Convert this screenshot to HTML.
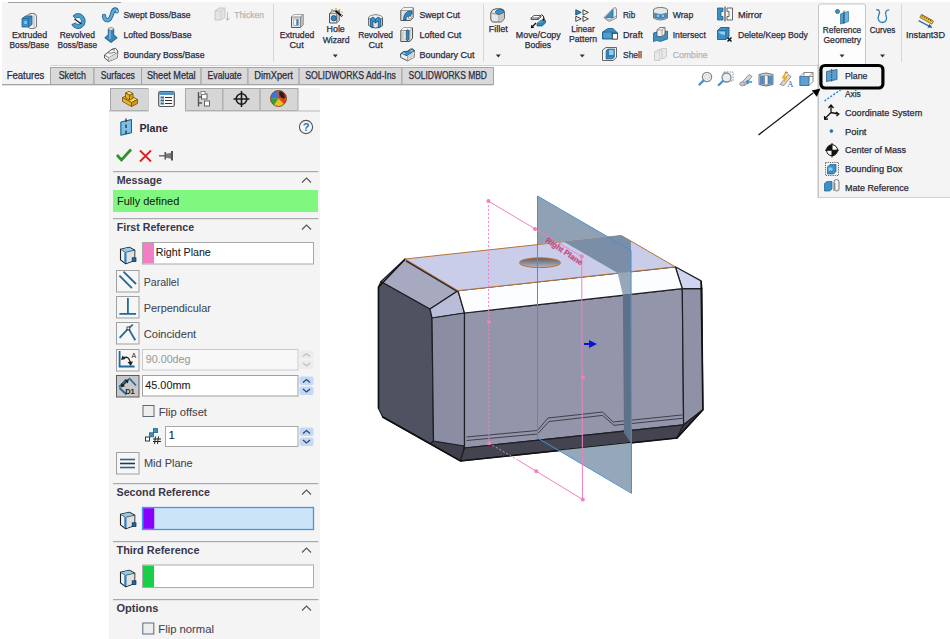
<!DOCTYPE html>
<html><head><meta charset="utf-8">
<style>
*{margin:0;padding:0}
html,body{width:950px;height:639px;overflow:hidden;background:#fff}
svg{position:absolute;left:0;top:0;font-family:"Liberation Sans",sans-serif}
</style></head><body>
<svg width="950" height="639" viewBox="0 0 950 639">
<rect x="0" y="0" width="950" height="66" fill="#f4f4f4" rx="0" />
<rect x="0" y="0" width="950" height="2" fill="#ffffff" rx="0" />
<rect x="0" y="0" width="2" height="66" fill="#ffffff" rx="0" />
<rect x="8" y="2" width="113" height="1" fill="#a0a0a0" rx="0" />
<rect x="50" y="65.2" width="900" height="1.6" fill="#cdcdcd" rx="0" />
<rect x="273" y="4" width="1" height="58" fill="#d6d6d6" rx="0" />
<rect x="483" y="4" width="1" height="58" fill="#d6d6d6" rx="0" />
<rect x="901" y="4" width="1" height="58" fill="#d6d6d6" rx="0" />
<path d="M818.5,64 V6 a2,2 0 0 1 2,-2 H863.5 a2,2 0 0 1 2,2 V64" fill="#fdfdfd" stroke="#c6c6c6" stroke-width="1"/>
<text x="29.5" y="37.6" font-size="9.2" text-anchor="middle" fill="#2a2a3c" font-weight="normal" textLength="35.2" lengthAdjust="spacingAndGlyphs" stroke="#2a2a3c" stroke-width="0.25" >Extruded</text>
<text x="29.3" y="47.8" font-size="9.2" text-anchor="middle" fill="#2a2a3c" font-weight="normal" textLength="39.5" lengthAdjust="spacingAndGlyphs" stroke="#2a2a3c" stroke-width="0.25" >Boss/Base</text>
<text x="77.3" y="37.6" font-size="9.2" text-anchor="middle" fill="#2a2a3c" font-weight="normal" textLength="35.3" lengthAdjust="spacingAndGlyphs" stroke="#2a2a3c" stroke-width="0.25" >Revolved</text>
<text x="77.2" y="47.8" font-size="9.2" text-anchor="middle" fill="#2a2a3c" font-weight="normal" textLength="39.6" lengthAdjust="spacingAndGlyphs" stroke="#2a2a3c" stroke-width="0.25" >Boss/Base</text>
<text x="123.4" y="18" font-size="9.2" text-anchor="start" fill="#2a2a3c" font-weight="normal" textLength="67.2" lengthAdjust="spacingAndGlyphs" stroke="#2a2a3c" stroke-width="0.25" >Swept Boss/Base</text>
<text x="123.4" y="37.9" font-size="9.2" text-anchor="start" fill="#2a2a3c" font-weight="normal" textLength="68.2" lengthAdjust="spacingAndGlyphs" stroke="#2a2a3c" stroke-width="0.25" >Lofted Boss/Base</text>
<text x="123.4" y="57.8" font-size="9.2" text-anchor="start" fill="#2a2a3c" font-weight="normal" textLength="81.1" lengthAdjust="spacingAndGlyphs" stroke="#2a2a3c" stroke-width="0.25" >Boundary Boss/Base</text>
<text x="234.2" y="18" font-size="9.2" text-anchor="start" fill="#b4b4b4" font-weight="normal" textLength="29.8" lengthAdjust="spacingAndGlyphs" stroke="#b4b4b4" stroke-width="0.25" >Thicken</text>
<text x="297" y="37.6" font-size="9.2" text-anchor="middle" fill="#2a2a3c" font-weight="normal" textLength="34.5" lengthAdjust="spacingAndGlyphs" stroke="#2a2a3c" stroke-width="0.25" >Extruded</text>
<text x="296.6" y="47.8" font-size="9.2" text-anchor="middle" fill="#2a2a3c" font-weight="normal" textLength="14.2" lengthAdjust="spacingAndGlyphs" stroke="#2a2a3c" stroke-width="0.25" >Cut</text>
<text x="335.7" y="32.4" font-size="9.2" text-anchor="middle" fill="#2a2a3c" font-weight="normal" textLength="18.2" lengthAdjust="spacingAndGlyphs" stroke="#2a2a3c" stroke-width="0.25" >Hole</text>
<text x="336.1" y="42.7" font-size="9.2" text-anchor="middle" fill="#2a2a3c" font-weight="normal" textLength="26.8" lengthAdjust="spacingAndGlyphs" stroke="#2a2a3c" stroke-width="0.25" >Wizard</text>
<text x="375.6" y="37.6" font-size="9.2" text-anchor="middle" fill="#2a2a3c" font-weight="normal" textLength="34.8" lengthAdjust="spacingAndGlyphs" stroke="#2a2a3c" stroke-width="0.25" >Revolved</text>
<text x="375.6" y="47.8" font-size="9.2" text-anchor="middle" fill="#2a2a3c" font-weight="normal" textLength="14.2" lengthAdjust="spacingAndGlyphs" stroke="#2a2a3c" stroke-width="0.25" >Cut</text>
<text x="419.4" y="18" font-size="9.2" text-anchor="start" fill="#2a2a3c" font-weight="normal" textLength="40.6" lengthAdjust="spacingAndGlyphs" stroke="#2a2a3c" stroke-width="0.25" >Swept Cut</text>
<text x="419.4" y="37.9" font-size="9.2" text-anchor="start" fill="#2a2a3c" font-weight="normal" textLength="42" lengthAdjust="spacingAndGlyphs" stroke="#2a2a3c" stroke-width="0.25" >Lofted Cut</text>
<text x="419.4" y="57.8" font-size="9.2" text-anchor="start" fill="#2a2a3c" font-weight="normal" textLength="55.2" lengthAdjust="spacingAndGlyphs" stroke="#2a2a3c" stroke-width="0.25" >Boundary Cut</text>
<text x="498.3" y="32" font-size="9.2" text-anchor="middle" fill="#2a2a3c" font-weight="normal" textLength="19.1" lengthAdjust="spacingAndGlyphs" stroke="#2a2a3c" stroke-width="0.25" >Fillet</text>
<text x="538.3" y="37.6" font-size="9.2" text-anchor="middle" fill="#2a2a3c" font-weight="normal" textLength="44.9" lengthAdjust="spacingAndGlyphs" stroke="#2a2a3c" stroke-width="0.25" >Move/Copy</text>
<text x="537.9" y="47.8" font-size="9.2" text-anchor="middle" fill="#2a2a3c" font-weight="normal" textLength="26.2" lengthAdjust="spacingAndGlyphs" stroke="#2a2a3c" stroke-width="0.25" >Bodies</text>
<text x="583" y="32" font-size="9.2" text-anchor="middle" fill="#2a2a3c" font-weight="normal" textLength="23.5" lengthAdjust="spacingAndGlyphs" stroke="#2a2a3c" stroke-width="0.25" >Linear</text>
<text x="583" y="42" font-size="9.2" text-anchor="middle" fill="#2a2a3c" font-weight="normal" textLength="28" lengthAdjust="spacingAndGlyphs" stroke="#2a2a3c" stroke-width="0.25" >Pattern</text>
<text x="623" y="17.8" font-size="9.2" text-anchor="start" fill="#2a2a3c" font-weight="normal" textLength="12.2" lengthAdjust="spacingAndGlyphs" stroke="#2a2a3c" stroke-width="0.25" >Rib</text>
<text x="623" y="37.6" font-size="9.2" text-anchor="start" fill="#2a2a3c" font-weight="normal" textLength="19.7" lengthAdjust="spacingAndGlyphs" stroke="#2a2a3c" stroke-width="0.25" >Draft</text>
<text x="623" y="57.6" font-size="9.2" text-anchor="start" fill="#2a2a3c" font-weight="normal" textLength="18.8" lengthAdjust="spacingAndGlyphs" stroke="#2a2a3c" stroke-width="0.25" >Shell</text>
<text x="672.7" y="17.8" font-size="9.2" text-anchor="start" fill="#2a2a3c" font-weight="normal" textLength="20.6" lengthAdjust="spacingAndGlyphs" stroke="#2a2a3c" stroke-width="0.25" >Wrap</text>
<text x="672.7" y="37.6" font-size="9.2" text-anchor="start" fill="#2a2a3c" font-weight="normal" textLength="33.1" lengthAdjust="spacingAndGlyphs" stroke="#2a2a3c" stroke-width="0.25" >Intersect</text>
<text x="672.7" y="57.6" font-size="9.2" text-anchor="start" fill="#b4b4b4" font-weight="normal" textLength="34.9" lengthAdjust="spacingAndGlyphs" stroke="#b4b4b4" stroke-width="0.25" >Combine</text>
<text x="738" y="17.8" font-size="9.2" text-anchor="start" fill="#2a2a3c" font-weight="normal" textLength="24.2" lengthAdjust="spacingAndGlyphs" stroke="#2a2a3c" stroke-width="0.25" >Mirror</text>
<text x="738" y="37.6" font-size="9.2" text-anchor="start" fill="#2a2a3c" font-weight="normal" textLength="69.8" lengthAdjust="spacingAndGlyphs" stroke="#2a2a3c" stroke-width="0.25" >Delete/Keep Body</text>
<text x="842" y="32.5" font-size="9.2" text-anchor="middle" fill="#2a2a3c" font-weight="normal" textLength="38.4" lengthAdjust="spacingAndGlyphs" stroke="#2a2a3c" stroke-width="0.25" >Reference</text>
<text x="842.3" y="42.5" font-size="9.2" text-anchor="middle" fill="#2a2a3c" font-weight="normal" textLength="37.7" lengthAdjust="spacingAndGlyphs" stroke="#2a2a3c" stroke-width="0.25" >Geometry</text>
<text x="882.5" y="32.5" font-size="9.2" text-anchor="middle" fill="#2a2a3c" font-weight="normal" textLength="25.6" lengthAdjust="spacingAndGlyphs" stroke="#2a2a3c" stroke-width="0.25" >Curves</text>
<text x="925.5" y="37.5" font-size="9.2" text-anchor="middle" fill="#2a2a3c" font-weight="normal" textLength="39" lengthAdjust="spacingAndGlyphs" stroke="#2a2a3c" stroke-width="0.25" >Instant3D</text>
<path d="M332.8,54.5 h5 l-2.5,3 z" fill="#333"/>
<path d="M495.8,54.5 h5 l-2.5,3 z" fill="#333"/>
<path d="M579.7,54.5 h5 l-2.5,3 z" fill="#333"/>
<path d="M839.5,54.5 h5 l-2.5,3 z" fill="#333"/>
<path d="M880.0,54.5 h5 l-2.5,3 z" fill="#333"/>
<rect x="0" y="66" width="950" height="18" fill="#ffffff" rx="0" />
<rect x="2" y="64" width="48" height="20" fill="#f4f4f4" rx="0" />
<rect x="50.5" y="67.5" width="43.5" height="17" fill="#d9d9d9" stroke="#a4a4a4" stroke-width="1"/>
<text x="72.25" y="78.9" font-size="10" text-anchor="middle" fill="#2a2a3c" font-weight="normal" textLength="27.2" lengthAdjust="spacingAndGlyphs" stroke="#2a2a3c" stroke-width="0.25" >Sketch</text>
<rect x="94.0" y="67.5" width="47.5" height="17" fill="#d9d9d9" stroke="#a4a4a4" stroke-width="1"/>
<text x="117.75" y="78.9" font-size="10" text-anchor="middle" fill="#2a2a3c" font-weight="normal" textLength="34.2" lengthAdjust="spacingAndGlyphs" stroke="#2a2a3c" stroke-width="0.25" >Surfaces</text>
<rect x="141.5" y="67.5" width="59.599999999999994" height="17" fill="#d9d9d9" stroke="#a4a4a4" stroke-width="1"/>
<text x="171.3" y="78.9" font-size="10" text-anchor="middle" fill="#2a2a3c" font-weight="normal" textLength="48.7" lengthAdjust="spacingAndGlyphs" stroke="#2a2a3c" stroke-width="0.25" >Sheet Metal</text>
<rect x="201.1" y="67.5" width="46.900000000000006" height="17" fill="#d9d9d9" stroke="#a4a4a4" stroke-width="1"/>
<text x="224.55" y="78.9" font-size="10" text-anchor="middle" fill="#2a2a3c" font-weight="normal" textLength="34.2" lengthAdjust="spacingAndGlyphs" stroke="#2a2a3c" stroke-width="0.25" >Evaluate</text>
<rect x="248.0" y="67.5" width="51.10000000000002" height="17" fill="#d9d9d9" stroke="#a4a4a4" stroke-width="1"/>
<text x="273.55" y="78.9" font-size="10" text-anchor="middle" fill="#2a2a3c" font-weight="normal" textLength="38.7" lengthAdjust="spacingAndGlyphs" stroke="#2a2a3c" stroke-width="0.25" >DimXpert</text>
<rect x="299.1" y="67.5" width="102.89999999999998" height="17" fill="#d9d9d9" stroke="#a4a4a4" stroke-width="1"/>
<text x="350.55" y="78.9" font-size="10" text-anchor="middle" fill="#2a2a3c" font-weight="normal" textLength="90.8" lengthAdjust="spacingAndGlyphs" stroke="#2a2a3c" stroke-width="0.25" >SOLIDWORKS Add-Ins</text>
<rect x="402.0" y="67.5" width="91.5" height="17" fill="#d9d9d9" stroke="#a4a4a4" stroke-width="1"/>
<text x="447.75" y="78.9" font-size="10" text-anchor="middle" fill="#2a2a3c" font-weight="normal" textLength="78.3" lengthAdjust="spacingAndGlyphs" stroke="#2a2a3c" stroke-width="0.25" >SOLIDWORKS MBD</text>
<text x="25.5" y="78.9" font-size="10" text-anchor="middle" fill="#2a2a3c" font-weight="normal" textLength="37.7" lengthAdjust="spacingAndGlyphs" stroke="#2a2a3c" stroke-width="0.25" >Features</text>
<rect x="2" y="84" width="491" height="1.3" fill="#9ea6a6" rx="0" />
<g transform="translate(698,71.5) scale(1)"><circle cx="9" cy="5.5" r="4.6" fill="#eef3f7" stroke="#8a8a8a" stroke-width="1.3"/><circle cx="9" cy="5.5" r="2.2" fill="none" stroke="#999" stroke-width="0.8" stroke-dasharray="1,1"/><path d="M5.5,9 L1.5,13" stroke="#4a90c8" stroke-width="2.4" stroke-linecap="round"/></g>
<g transform="translate(717,71.5) scale(1)"><rect x="7" y="0.5" width="9" height="9" fill="none" stroke="#777" stroke-width="0.9" stroke-dasharray="1.5,1.2"/><circle cx="9.5" cy="6" r="4.5" fill="#e4eef6" stroke="#8a8a8a" stroke-width="1.3"/><path d="M6,9.5 L1.8,13.5" stroke="#4a90c8" stroke-width="2.4" stroke-linecap="round"/></g>
<g transform="translate(738,71.5) scale(1)"><path d="M3,12 L11,3 L14,5 L7,14 Z" fill="#d8d8d8" stroke="#888" stroke-width="0.9"/><ellipse cx="4.5" cy="12.3" rx="2.8" ry="2" fill="#c4c4c4" stroke="#888" stroke-width="0.8"/><path d="M8,10.5 H14 M8,10.5 l2.5,-2 M8,10.5 l2.5,2" stroke="#3a8fc4" stroke-width="1.5" fill="none"/></g>
<g transform="translate(758,71.5) scale(1)"><path d="M1,3 Q8,0 15,3 V13 Q8,16 1,13 Z" fill="#dadde2" stroke="#666" stroke-width="0.9"/><rect x="2" y="4" width="4.5" height="9" fill="#3a7fc0" opacity=".85"/><rect x="10" y="4" width="4.5" height="9" fill="#3a7fc0" opacity=".85"/><path d="M6.5,4 Q8,3 10,4 V13 Q8,14 6.5,13 Z" fill="#f0f0f0" stroke="#666" stroke-width="0.6"/></g>
<g transform="translate(778,71.5) scale(1)"><path d="M2,13 L10,3 L13,5 L6,14 Z" fill="#d9d9d9" stroke="#888" stroke-width="0.9"/><path d="M8,1 L5,6 L8,6 L6,10" stroke="#e8b020" stroke-width="1.8" fill="none"/><path d="M7,0.5 l3,1" stroke="#e08040" stroke-width="1.5"/><text x="9" y="15" font-size="9" font-family="Liberation Serif" fill="#3a6fb0">A</text></g>
<g transform="translate(799,71.5) scale(1)"><path d="M1,5 L5,1 H14 V10 L10,14 H1 Z" fill="#fff" stroke="#777" stroke-width="0.9"/><rect x="1" y="5" width="9" height="9" fill="#5a9fd6" stroke="#3a6f9a" stroke-width="0.8"/><path d="M10,5 L14,1 M5,1 V5 M10,5 V10 M14,5 H10" stroke="#777" stroke-width="0.8" fill="none"/></g>
<g transform="translate(21,13) scale(1)"><path d="M6,2.5 L9,0.5 H13 Q15.5,1 15.5,3 V14 L13,15.5 H9 L6,13 Z" fill="#f2f2f2" stroke="#6d6d6d" stroke-width="0.9"/><path d="M9,0.5 V13 M13,0.5 V15.5" stroke="#999" stroke-width="0.7"/><path d="M1,5.5 L4.5,3 H11 V11.5 L7.5,14 H1 Z" fill="#3d8fc4" stroke="#1f5f8a" stroke-width="0.8"/><path d="M1,5.5 H7.5 V14 M7.5,5.5 L11,3" stroke="#1f5f8a" stroke-width="0.7" fill="none"/><rect x="3" y="8" width="3" height="3" fill="#7cc0ea"/></g>
<g transform="translate(70,13) scale(1)"><path d="M3,3 A7,7.5 0 1 1 1.9,11.5 L5.5,10 A3.3,3.5 0 1 0 5.6,5.6 Z" fill="#4a9ed2" stroke="#1f5f8a" stroke-width="0.9"/><path d="M4.5,6 L11.5,11" stroke="#222" stroke-width="1.2"/></g>
<g transform="translate(102,7) scale(1)"><path d="M2,8.8 Q2.5,13.8 6,13.2 Q8.5,12.5 10.2,6.5 Q11.3,2.6 13,2.4 Q14.6,2.4 14.8,4.4" fill="none" stroke="#1f5f8a" stroke-width="4.2" stroke-linecap="round"/><path d="M2,8.8 Q2.5,13.8 6,13.2 Q8.5,12.5 10.2,6.5 Q11.3,2.6 13,2.4 Q14.6,2.4 14.8,4.4" fill="none" stroke="#5aaede" stroke-width="2.5" stroke-linecap="round"/><circle cx="15" cy="4.6" r="1" fill="#9fd4f2"/></g>
<g transform="translate(104,27) scale(1)"><path d="M4.3,2 Q7,0.5 9.7,2 V7.5 Q11,9 13.2,10.8 L7,15.5 L0.8,10.8 Q3,9 4.3,7.5 Z" fill="#3a86bc" stroke="#1f5070" stroke-width="0.9"/><ellipse cx="7" cy="2" rx="2.7" ry="1.3" fill="#f4f4f4" stroke="#555" stroke-width="0.6"/><path d="M6,3.5 V12" stroke="#7fc0e8" stroke-width="1.4"/></g>
<g transform="translate(104,48) scale(1)"><path d="M0.5,7 L8,1.2 L11.5,0.3 L13.8,3 L13.3,10 L4.8,13.3 L0.6,10 Z" fill="#f2f2f2" stroke="#444" stroke-width="0.9"/><path d="M0.5,7 L4.8,9.8 L13.5,4.5 M4.8,9.8 V13.3 M4,4.5 Q6,6 8,5 Q10,3.8 11.5,4.8 M8,1.2 Q9,2.5 11,2" stroke="#555" stroke-width="0.7" fill="none"/><path d="M4.8,9.8 L13.4,5 L13.3,10 L4.8,13.3 Z" fill="#d8d8d8"/></g>
<g transform="translate(214,7) scale(1)"><path d="M1,4 L5,1 H11 V10 L7,13 H1 Z" fill="#e4e4e4" stroke="#c4c4c4" stroke-width="0.9"/><path d="M1,4 H7 V13 M7,4 L11,1" stroke="#c8c8c8" stroke-width="0.7" fill="none"/><path d="M13.5,5 V13 M11.5,11 L13.5,13.5 L15.5,11" stroke="#bdbdbd" stroke-width="1" fill="none"/></g>
<g transform="translate(291,14) scale(1)"><path d="M0.5,3 L3,0.5 H12 V11 L9.5,13.5 H0.5 Z" fill="#e6e6e6" stroke="#5a5a5a" stroke-width="1"/><path d="M9.5,3 L12,0.5 V11 L9.5,13.5 Z" fill="#bcbcbc"/><path d="M0.5,3 L3,0.5 H12 L9.5,3 Z" fill="#f6f6f6"/><path d="M0.5,3 H9.5 V13.5 M9.5,3 L12,0.5" stroke="#666" stroke-width="0.7" fill="none"/><rect x="2.8" y="5" width="4.5" height="6.5" fill="#fafafa" stroke="#888" stroke-width="0.6"/><path d="M5.3,5.3 H7.2 V11.3 H5.3 Z" fill="#2f86c4"/></g>
<g transform="translate(329,8) scale(1)"><path d="M0.5,5.5 L3.5,3 H10.5 V12.5 L7.5,15 H0.5 Z" fill="#e4e4e4" stroke="#555" stroke-width="1"/><path d="M7.5,5.5 L10.5,3 V12.5 L7.5,15 Z" fill="#b8b8b8"/><path d="M0.5,5.5 H7.5 V15 M7.5,5.5 L10.5,3" stroke="#666" stroke-width="0.7" fill="none"/><circle cx="4.8" cy="10.2" r="2.6" fill="#2f86c4" stroke="#114a70" stroke-width="0.8"/><path d="M6.5,3 L13.5,8.5" stroke="#111" stroke-width="1.8"/><path d="M12,7.3 L14,8.9" stroke="#e8e8e8" stroke-width="1"/><circle cx="3" cy="2" r="0.9" fill="#e0a020"/><circle cx="7" cy="0.9" r="0.9" fill="#e0a020"/><circle cx="10.5" cy="1.8" r="0.9" fill="#e0a020"/><circle cx="13" cy="4" r="0.8" fill="#e0a020"/></g>
<g transform="translate(368,14) scale(1)"><path d="M0.7,3.5 Q7.5,-1.5 14.5,3.5 V11.5 Q7.5,16.5 0.7,11.5 Z" fill="#e2e2e2" stroke="#555" stroke-width="1"/><ellipse cx="7.6" cy="3.5" rx="6.9" ry="2.7" fill="#f4f4f4" stroke="#666" stroke-width="0.7"/><path d="M2.5,4.5 L5,3 L7.5,5 L10,3 L12.8,4.5 V12.8 L10.3,14 V7 L7.5,9 L5,7 V14 L2.5,12.8 Z" fill="#3a8fc8" stroke="#144a70" stroke-width="0.7"/><path d="M7.5,5 V9" stroke="#144a70" stroke-width="0.6"/></g>
<g transform="translate(400,7) scale(1)"><path d="M0.8,3.5 L3.5,0.8 H13.2 V10.5 L10.5,13.5 H0.8 Z" fill="#e2e2e2" stroke="#555" stroke-width="1"/><path d="M0.8,3.5 L3.5,0.8 H13.2 L10.5,3.5 Z" fill="#f4f4f4"/><path d="M3.5,13 Q3.5,5 10,3.8 H12 V7 Q10.5,7.3 10.5,9 V10.5 H8.5 Q8,9 7,9.3 Q6,10 6,13 Z" fill="#2f86c4" stroke="#144a70" stroke-width="0.7"/><circle cx="10" cy="10.5" r="1.5" fill="#fff" stroke="#444" stroke-width="0.5"/><path d="M0.8,3.5 H10.5" stroke="#666" stroke-width="0.6"/></g>
<g transform="translate(400,27) scale(1)"><path d="M0.8,3.5 L3.5,0.8 H12.5 V11.5 L9.8,14.5 H0.8 Z" fill="#e6e6e6" stroke="#555" stroke-width="1"/><path d="M0.8,3.5 L3.5,0.8 H12.5 L9.8,3.5 Z" fill="#f6f6f6"/><path d="M0.8,3.5 H9.8 V14.5 M9.8,3.5 L12.5,0.8" stroke="#666" stroke-width="0.6" fill="none"/><path d="M2,4.5 H4 V13.5 H2 Z" fill="#cfcfcf"/><path d="M6.3,3.5 Q7.5,2 8.8,3.5 V8 Q8.2,10 8.8,12 L7.5,14 L6,12.5 Q6.8,10 6.3,8 Z" fill="#2f86c4" stroke="#144a70" stroke-width="0.7"/></g>
<g transform="translate(400,48) scale(1)"><path d="M0.5,6 L3,4 Q5,3 7,3.5 L10.5,1 Q12.5,0 14.5,2.5 V9 L7.5,12.8 L0.7,9.5 Z" fill="#f0f0f0" stroke="#444" stroke-width="0.9"/><path d="M0.5,6 Q2,5 4,6.5 Q6,8 7.5,7.5 L14.5,3 L12,1.2 Q10,2 9,3 L7,3.5 L3,4 Z" fill="#3a8fc8" stroke="#144a70" stroke-width="0.7"/><ellipse cx="4" cy="5.2" rx="1.4" ry="0.7" fill="#9fd4f2"/><ellipse cx="11.5" cy="2.8" rx="1.4" ry="0.7" fill="#9fd4f2"/><path d="M7.5,7.5 V12.8" stroke="#555" stroke-width="0.7"/><path d="M7.5,7.8 L14.5,3.2 V9 L7.5,12.8 Z" fill="#d4d4d4"/></g>
<g transform="translate(490,8) scale(1)"><path d="M0.8,4.5 Q2,1 6,0.8 H11 Q14.5,1 14.5,5 V10.5 L11.5,14 H3 Q0.8,13.5 0.8,11 Z" fill="#e8e8e8" stroke="#555" stroke-width="1"/><path d="M5,4 Q6.5,1.5 9.5,1.3 H11 Q14,1.5 14,4.5 Q12,6.5 9,6.5 Q6,6 5,4 Z" fill="#3a8fc8" stroke="#144a70" stroke-width="0.6"/><path d="M0.8,4.5 Q3,6 9,6.5 V14 M9,6.5 Q13,6 14.5,3.5" stroke="#666" stroke-width="0.7" fill="none"/><path d="M9.5,6.8 Q13.5,6 14.2,4.5 V10.3 L11.5,13.6 H9.5 Z" fill="#c8c8c8"/></g>
<g transform="translate(530,14) scale(1)"><path d="M1,4 L4,1.5 H11 L8,4 Z" fill="#fff" stroke="#333" stroke-width="0.8"/><path d="M1,4 V5.5 H8 L11,3 V1.5 M8,4 V5.5" stroke="#333" stroke-width="0.8" fill="none"/><path d="M7,9.5 L10.5,6.5 H15.5 L12,9.5 Z" fill="#5aaede" stroke="#144a70" stroke-width="0.7"/><path d="M7,9.5 V12 H12 L15.5,9 V6.5" fill="#2f86c4" stroke="#144a70" stroke-width="0.7"/><path d="M11.5,0.5 Q14.5,1.5 13.8,5.5" stroke="#111" stroke-width="1" fill="none"/><path d="M12,5 L13.8,7 L15.2,4.6 Z" fill="#111"/><path d="M6,9 L2,13" stroke="#111" stroke-width="1.2"/><path d="M0.8,14.3 L1.3,10.8 L4.3,13.8 Z" fill="#111"/></g>
<g transform="translate(575,9) scale(1)"><path d="M0.8,0.8 L6.2,3.4 L0.8,6 Z" fill="#2f86c4" stroke="#144a70" stroke-width="0.9"/><path d="M8,0.8 L13.4,3.4 L8,6 Z M0.8,7.2 L6.2,9.8 L0.8,12.4 Z M8,7.2 L13.4,9.8 L8,12.4 Z" fill="#fafafa" stroke="#333" stroke-width="0.9"/></g>
<g transform="translate(603,7) scale(1)"><path d="M1,10.5 L9.5,2 L12,0.5 Q13.5,1 13.5,3 V11 L6,14.5 Z" fill="#ececec" stroke="#777" stroke-width="0.8"/><path d="M2.5,10.5 L10,2.5 V10.5 Z" fill="#3d8fc4" stroke="#1f5f8a" stroke-width="0.7"/><path d="M1,10.5 L6,13 L13.5,9" stroke="#777" stroke-width="0.7" fill="none"/></g>
<g transform="translate(602,28) scale(1)"><path d="M0.5,4 L6,0.5 H11 L15.5,5 V11 H0.5 Z" fill="#3d8fc4" stroke="#1f5f8a" stroke-width="0.9"/><path d="M0.5,4 H10 L15.5,5 M10,4 V11" stroke="#1f5f8a" stroke-width="0.6" fill="none"/><rect x="10.5" y="5.5" width="5" height="5.5" fill="#fff" stroke="#333" stroke-width="0.7"/><path d="M2,5 L9,4.5 L10,10 H2 Z" fill="#5aa8da" opacity=".6"/></g>
<g transform="translate(602,47) scale(1)"><path d="M0.5,3 L4,0.5 H14.5 V10.5 L11,13.5 H0.5 Z" fill="#f4f4f4" stroke="#555" stroke-width="0.9"/><path d="M4,3.5 L6,2 H12.5 V10 L10.5,12 H4 Z" fill="#3d8fc4" stroke="#1f5f8a" stroke-width="0.6"/><path d="M6,2 V9 H12.5 M6,9 L4,12" stroke="#1f5f8a" stroke-width="0.6" fill="none"/><path d="M7,3 h4.5 v5 h-4.5 z" fill="#8fcbef"/></g>
<g transform="translate(653,7) scale(1)"><ellipse cx="7.5" cy="3" rx="7" ry="2.5" fill="#e8e8e8" stroke="#666" stroke-width="0.9"/><path d="M0.5,3 V11 Q7.5,15 14.5,11 V3" fill="#e8e8e8" stroke="#666" stroke-width="0.9"/><path d="M1.5,6 Q7.5,9 13.5,6 V10.5 Q7.5,13 1.5,10.5 Z" fill="#3d8fc4" stroke="#1f5f8a" stroke-width="0.5"/><path d="M4,8 h2 v2 h-2z M9,8 h2 v2 h-2z" fill="#8fcbef"/></g>
<g transform="translate(653,27) scale(1)"><path d="M0.5,6 Q4,4 7,6 L14.5,4 V12 L7,14.5 Q4,12.5 0.5,14.5 Z" fill="#3d8fc4" stroke="#1f5f8a" stroke-width="0.8"/><path d="M4,3 L7,0.5 H12 V7 L9,9.5 H4 Z" fill="#efefef" stroke="#555" stroke-width="0.8"/><path d="M4,3 H9 V9.5 M9,3 L12,0.5" stroke="#777" stroke-width="0.6" fill="none"/></g>
<g transform="translate(654,48) scale(1)"><path d="M0.5,4 L3,2 H8 V10 L5.5,12.5 H0.5 Z M5,2 L8,0.5 H12.5 V8.5 L10,10.5 H8" fill="#e8e8e8" stroke="#c8c8c8" stroke-width="0.9"/><path d="M0.5,4 H5.5 V12.5 M5.5,4 L8,2" stroke="#ccc" stroke-width="0.7" fill="none"/></g>
<g transform="translate(717,7) scale(1)"><path d="M0.5,1 H6 V4.5 H4 V9.5 H6 V13 H0.5 Z" fill="#3d8fc4" stroke="#1f5f8a" stroke-width="0.8"/><path d="M8,-0.5 V14.5" stroke="#333" stroke-width="1"/><path d="M15.5,1 H10 V4.5 H12 V9.5 H10 V13 H15.5 Z" fill="#f4f4f4" stroke="#444" stroke-width="0.8"/></g>
<g transform="translate(717,27) scale(1)"><path d="M0.5,3.5 L3.5,0.5 H12 V9.5 L9,12.5 H0.5 Z" fill="#3d8fc4" stroke="#1f5f8a" stroke-width="0.9"/><path d="M0.5,3.5 H9 V12.5 M9,3.5 L12,0.5" stroke="#1f5f8a" stroke-width="0.7" fill="none"/><path d="M1.5,4.5 H8 V8 Q4,8 1.5,5 Z" fill="#8fcbef"/><path d="M10.5,10.5 L14.5,14.5 M14.5,10.5 L10.5,14.5" stroke="#111" stroke-width="1.5"/></g>
<g transform="translate(835,9) scale(1)"><circle cx="2.5" cy="2.5" r="2" fill="#3d8fc4" stroke="#1f5f8a" stroke-width="0.8"/><path d="M5.5,5 L9,3.5 V14 L5.5,15 Z" fill="#4a9ed2" stroke="#1f5f8a" stroke-width="0.6"/><path d="M9,3.5 L13.5,2.5 V12.5 L9,14 Z" fill="#6ab4e0" stroke="#1f5f8a" stroke-width="0.6"/><path d="M9,1.5 V15" stroke="#333" stroke-width="0.9" stroke-dasharray="1.2,0.8"/></g>
<g transform="translate(876,9) scale(1)"><path d="M0.3,0.8 C3,0.4 4.5,2 2.8,6 C1,10 3,13.5 6.5,13.5 C10,13.5 11.5,10 10,6.5 C8.5,3 10.5,0.8 13.2,0.8" fill="none" stroke="#2f7fb8" stroke-width="1.3"/></g>
<g transform="translate(918,14) scale(1)"><path d="M3.5,0.3 L15.5,7 L13.8,10.2 L1.8,3.5 Z" fill="#e8b830" stroke="#6a4a00" stroke-width="0.6"/><path d="M5,1.2 L4.2,2.6 M7,2.3 L6.2,3.7 M9,3.4 L8.2,4.8 M11,4.5 L10.2,5.9 M13,5.6 L12.2,7" stroke="#5a3a00" stroke-width="0.9"/><path d="M0.6,6.6 L12,12.6" stroke="#2a78b8" stroke-width="1.5"/><path d="M14.5,13.8 L9.5,13.6 L11.5,10 Z" fill="#1a5a90"/></g>
<g stroke="#1e1e24" stroke-width="1.2" stroke-linejoin="round">
<polygon points="378.5,287 381,281.5 430,309 432,318 433.5,441 430.6,443.7 382.7,417 378.5,408.5" fill="#4f5260"/>
<polygon points="382.7,417 430.6,443.7 433.5,441 464.5,446 460.5,461" fill="#3f404c"/>
<polygon points="405.2,259 458,290.7 430,309 381,281.5" fill="#a6a9bf"/>
<polygon points="458,290.7 464.5,313 432,318 430,309" fill="#b9bdd8"/>
<polygon points="432,318 464.5,313 464.5,446 433.5,441" fill="#8b8ea3"/>
<polygon points="464.5,313 682.3,288.7 683.6,424.8 464.5,448" fill="#9396ab"/>
<polygon points="464.5,448 683.6,424.8 677,438 460.5,461" fill="#434450"/>
<polygon points="682.3,288.7 702,288.7 702.9,409.8 683.6,424.8" fill="#8f92a6"/>
<polygon points="702.9,409.8 683.6,424.8 677,438" fill="#3a3b46"/>
<polygon points="675.3,266.8 701.1,280.9 702,288.7 682.3,288.7" fill="#d0d4ee"/>
<polygon points="458,290.7 675.3,266.8 682.3,288.7 464.5,313" fill="#fcfdff"/>
</g>
<path d="M378.5,408.5 V287 L405.2,259 M701.1,280.9 L702.9,409.8 L677,438 L460.5,461 L382.7,417" fill="none" stroke="#111" stroke-width="1.6"/>
<polygon points="405.2,259 621.3,235.5 675.3,266.8 458,290.7" fill="#c9cde9" stroke="#b87333" stroke-width="1"/>
<path d="M406,261 L458,292" stroke="#222" stroke-width="1.2"/>
<defs><linearGradient id="hg" x1="0" y1="0" x2="0" y2="1"><stop offset="0" stop-color="#5a5c66"/><stop offset="1" stop-color="#b4b6c2"/></linearGradient></defs><ellipse cx="540" cy="262.7" rx="20.5" ry="4.9" fill="url(#hg)" stroke="#b87333" stroke-width="1"/>
<g fill="none" stroke="#2a2a30" stroke-width="0.8">
<polyline points="466.5,437 537.4,430.5 548,418 602.6,412 613.2,422 682.6,414.9"/>
<polyline points="466.5,440.5 537.4,434 549,421.5 602.6,415.4 614,425.3 682.6,418.3"/>
</g>
<polygon points="537.2,196 631,250.3 631,241.1 621.3,235.5 537.2,244.6" fill="#8fa1b3"/>
<polygon points="563.9,241.7 621.3,235.5 631,241.1 631,271.7 617.7,273.1" fill="#7a8ea8"/>
<polygon points="617.7,273.1 631,271.7 631,293.8 622.8,294.6" fill="#95a7b8"/>
<polygon points="622.8,294.6 631,293.8 631,443 624,433" fill="#5f7189"/>
<polygon points="559,450.6 632,493.3 632,442.8" fill="#94a8ba"/>
<polyline points="537.5,438.5 537.5,196 631,250.3 631.5,493.3 538.4,438.5" stroke="#4a90d0" stroke-width="1" fill="none"/>
<g stroke="#f080c0" stroke-width="1" fill="none">
<line x1="488.4" y1="201.1" x2="581.7" y2="256.6"/>
<line x1="581.7" y1="256.6" x2="582.5" y2="499.4"/>
<line x1="517" y1="459.5" x2="582.5" y2="499.4"/>
<line x1="488.4" y1="201.1" x2="488.9" y2="443.2" stroke-dasharray="2,2"/>
<line x1="488.9" y1="443.2" x2="517" y2="459.5" stroke-dasharray="2,2"/>
</g>
<g fill="#f080c0">
<circle cx="488.4" cy="201.1" r="2"/><circle cx="535" cy="229.1" r="2"/><circle cx="581.7" cy="256.6" r="2"/>
<circle cx="489" cy="322" r="2"/><circle cx="583" cy="377.3" r="2"/>
<circle cx="489.2" cy="443.2" r="2"/><circle cx="536.3" cy="471.2" r="2"/><circle cx="582.8" cy="499.4" r="2"/>
</g>
<text transform="translate(545,241.5) rotate(34)" font-size="7.8" font-weight="bold" fill="#b02868" stroke="#d87aa8" stroke-width="0.35">Right Plane</text>
<path d="M584,344 H591 M590,341.5 L595,344 L590,346.5 Z" stroke="#1010d0" stroke-width="1.8" fill="#1010d0"/>

<rect x="109" y="111" width="211" height="528" fill="#f4f4f4" rx="0" />
<rect x="297" y="88" width="23" height="23" fill="#f4f4f4" rx="0" />
<rect x="110.5" y="88.5" width="38" height="22" fill="#d6d6d6" stroke="#a8a8a8" stroke-width="1"/>
<rect x="185.5" y="88.5" width="37.400000000000006" height="22" fill="#d6d6d6" stroke="#a8a8a8" stroke-width="1"/>
<rect x="222.9" y="88.5" width="37.20000000000002" height="22" fill="#d6d6d6" stroke="#a8a8a8" stroke-width="1"/>
<rect x="260.1" y="88.5" width="37.89999999999998" height="22" fill="#d6d6d6" stroke="#a8a8a8" stroke-width="1"/>
<rect x="148.5" y="88" width="36.5" height="23.5" fill="#f4f4f4" rx="0" />
<rect x="109" y="110.5" width="39.5" height="1" fill="#b8b8b8" rx="0" />
<rect x="185" y="110.5" width="135" height="1" fill="#b8b8b8" rx="0" />
<g transform="translate(122,91) scale(1)"><g stroke="#7a4a10" stroke-width="0.8" stroke-linejoin="round"><path d="M0.5,6.5 L6.5,3.5 L15.5,8.5 L9.5,11.5 Z" fill="#f8dc50"/><path d="M0.5,6.5 L9.5,11.5 V15.5 L0.5,10.5 Z" fill="#e6b420"/><path d="M9.5,11.5 L15.5,8.5 V12.5 L9.5,15.5 Z" fill="#cf9a18"/><path d="M3.5,2 L7,0.3 L11,2.5 L7.5,4.2 Z" fill="#fae460"/><path d="M3.5,2 L7.5,4.2 V9 L3.5,6.8 Z" fill="#e6b420"/><path d="M7.5,4.2 L11,2.5 V7.3 L7.5,9 Z" fill="#d8a418"/></g></g>
<g transform="translate(158,91) scale(1)"><rect x="0.7" y="0.7" width="15.6" height="14.8" rx="1.5" fill="#f8f8f8" stroke="#555" stroke-width="1.2"/><rect x="1.3" y="1.3" width="14.4" height="2.6" fill="#3d8fc4"/><rect x="2.5" y="5.5" width="3.5" height="2" fill="#2a6fa0"/><rect x="2.5" y="8.5" width="3.5" height="2" fill="#2a6fa0"/><rect x="2.5" y="11.5" width="3.5" height="2" fill="#2a6fa0"/><path d="M7,6.5 H14 M7,9.5 H14 M7,12.5 H14" stroke="#333" stroke-width="1"/></g>
<g transform="translate(197,91) scale(1)"><path d="M1.5,1 V15.5 M1.5,6 H5 M1.5,12 H5" stroke="#555" stroke-width="1.4" fill="none"/><rect x="4.5" y="3" width="5.5" height="5" fill="#fff" stroke="#555" stroke-width="0.9"/><rect x="7.5" y="10" width="5" height="5" fill="#fff" stroke="#555" stroke-width="0.9"/><rect x="4" y="0.5" width="4" height="3" fill="#fff" stroke="#666" stroke-width="0.7"/></g>
<g transform="translate(233,91) scale(1)"><circle cx="8.5" cy="8" r="5.3" fill="none" stroke="#1a1a1a" stroke-width="1.6"/><path d="M8.5,0 V16 M0.5,8 H16.5" stroke="#1a1a1a" stroke-width="1.6"/></g>
<g transform="translate(270,90) scale(1)"><circle cx="8.5" cy="8.5" r="8" fill="#e8c020"/><path d="M8.5,8.5 L8.5,0.5 A8,8 0 0 0 0.5,8.5 Z" fill="#3a78d8"/><path d="M8.5,8.5 L0.5,8.5 A8,8 0 0 0 4,15 Z" fill="#30a040"/><path d="M8.5,8.5 L8.5,0.5 A8,8 0 0 1 16.5,8.5 Z" fill="#d02020"/><path d="M8.5,8.5 L16.5,8.5 A8,8 0 0 1 14,14 Z" fill="#e04020"/><ellipse cx="12" cy="5" rx="2" ry="4" transform="rotate(-30 12 5)" fill="#222"/><circle cx="8.5" cy="8.5" r="8" fill="none" stroke="#7a4a20" stroke-width="0.9"/></g>
<g transform="translate(120,119) scale(1)"><path d="M0.8,3 L11.5,0.5 V13.8 L0.8,16.3 Z" fill="#6ab2de" stroke="#1f5f8a" stroke-width="1"/><path d="M2,4 L10.5,2 V12.8 L2,14.8 Z" fill="#80c0e8"/><path d="M6,-0.5 V17" stroke="#222" stroke-width="1.2" stroke-dasharray="3.5,2.5"/></g>
<text x="139.5" y="131.6" font-size="10.8" text-anchor="start" fill="#28283a" font-weight="bold" textLength="28.4" lengthAdjust="spacingAndGlyphs" >Plane</text>
<circle cx="306" cy="127" r="6.6" fill="#f8f8f8" stroke="#555" stroke-width="1.1"/><text x="306" y="131.2" font-size="11" font-weight="bold" text-anchor="middle" fill="#2a6fb8">?</text>
<path d="M117,155 L121.5,160 L131,149.5" stroke="#35902a" stroke-width="2.8" fill="none"/>
<path d="M140,150.5 L151,161.5 M151,150.5 L140,161.5" stroke="#d82020" stroke-width="1.8"/>
<path d="M159,155.8 H165" stroke="#666" stroke-width="1.4"/><rect x="164.5" y="152" width="1.6" height="7.5" fill="#555"/><path d="M166,153.8 L171,152.8 V158.8 L166,157.8 Z" fill="#7a7a7a"/><rect x="171" y="151" width="2" height="9.5" fill="#555"/>
<rect x="113" y="171" width="205.5" height="1.2" fill="#a9a9a9" rx="0" />
<text x="116.7" y="183.8" font-size="10.8" text-anchor="start" fill="#38384a" font-weight="bold" textLength="45.3" lengthAdjust="spacingAndGlyphs" >Message</text>
<path d="M302,182.5 L306.5,178 L311,182.5" stroke="#555" stroke-width="1.1" fill="none"/>
<rect x="113" y="190" width="205" height="22" fill="#80f880" rx="0" />
<text x="117" y="205" font-size="11.5" text-anchor="start" fill="#1a1a1a" font-weight="normal" textLength="62.3" lengthAdjust="spacingAndGlyphs" stroke="#1a1a1a" stroke-width="0.08" >Fully defined</text>
<rect x="113" y="218" width="205.5" height="1.2" fill="#a9a9a9" rx="0" />
<text x="116.7" y="230.8" font-size="10.8" text-anchor="start" fill="#38384a" font-weight="bold" textLength="77.5" lengthAdjust="spacingAndGlyphs" >First Reference</text>
<path d="M302,229.5 L306.5,225 L311,229.5" stroke="#555" stroke-width="1.1" fill="none"/>
<g transform="translate(119,247) scale(1)"><path d="M1.5,2.2 L10.4,0.2 L15.8,3.2 L15.6,13.6 L6.7,16.7 L1.5,12.9 Z" fill="#f2f2f2" stroke="#222" stroke-width="1.1" stroke-linejoin="round"/><path d="M1.9,2.5 L10.4,0.6 L15.3,3.4 L6.3,5.4 Z" fill="#8cccf2"/><path d="M6.3,5.4 L15.3,3.4 V13.3 L6.7,16.3 Z" fill="#e0e0e0"/><path d="M6.3,5.4 L15.8,3.2 M1.5,2.2 L6.3,5.4" stroke="#333" stroke-width="0.7" fill="none"/><path d="M6.4,5.6 V16" stroke="#2a7fc0" stroke-width="2.2"/><rect x="13.2" y="10.8" width="3.8" height="3.8" fill="#1f6aa8" stroke="#0a2a50" stroke-width="0.7"/></g>
<rect x="142.5" y="242.5" width="171" height="21.5" fill="#fff" stroke="#a8a8a8" stroke-width="1"/>
<rect x="143" y="243" width="11" height="20.5" fill="#f47ec4" rx="0" />
<text x="155.8" y="256" font-size="11.5" text-anchor="start" fill="#1a1a1a" font-weight="normal" textLength="55" lengthAdjust="spacingAndGlyphs" stroke="#1a1a1a" stroke-width="0.08" >Right Plane</text>
<rect x="116.5" y="270.5" width="22.5" height="21.5" fill="#f6f6f6" stroke="#a0a0a0" stroke-width="1"/>
<g transform="translate(117,271) scale(1)"><path d="M2.4,4.7 L14.9,17.2 M6.5,0.6 L19,13" stroke="#1f6a9a" stroke-width="1.8"/></g>
<text x="143.7" y="286.1" font-size="11.5" text-anchor="start" fill="#44444e" font-weight="normal" textLength="35.3" lengthAdjust="spacingAndGlyphs" stroke="#44444e" stroke-width="0.08" >Parallel</text>
<rect x="116.5" y="296.5" width="22.5" height="21.5" fill="#f6f6f6" stroke="#a0a0a0" stroke-width="1"/>
<g transform="translate(117,297) scale(1)"><path d="M10.9,1 V16.8 M2.4,16.8 H19" stroke="#1f6a9a" stroke-width="1.8"/></g>
<text x="143.7" y="311.6" font-size="11.5" text-anchor="start" fill="#44444e" font-weight="normal" textLength="67.2" lengthAdjust="spacingAndGlyphs" stroke="#44444e" stroke-width="0.08" >Perpendicular</text>
<rect x="116.5" y="322.5" width="22.5" height="21.5" fill="#f6f6f6" stroke="#a0a0a0" stroke-width="1"/>
<g transform="translate(117,323) scale(1)"><path d="M2.6,14.8 L11.4,5.4 L18.3,17.3 M11.4,5.4 L15.8,1.6" stroke="#1f6a9a" stroke-width="1.8" fill="none"/><rect x="10" y="4" width="2.8" height="2.8" fill="#fff" stroke="#222" stroke-width="0.8"/></g>
<text x="143.7" y="338" font-size="11.5" text-anchor="start" fill="#44444e" font-weight="normal" textLength="52.5" lengthAdjust="spacingAndGlyphs" stroke="#44444e" stroke-width="0.08" >Coincident</text>
<rect x="116.5" y="349.5" width="22.5" height="21.5" fill="#f6f6f6" stroke="#a0a0a0" stroke-width="1"/>
<g transform="translate(117,350) scale(1)"><path d="M2.6,1 V16.5 H17.6" stroke="#1f6a9a" stroke-width="1.8" fill="none"/><path d="M6,8 Q12,5 13.5,13" stroke="#222" stroke-width="1.4" fill="none"/><path d="M4,10 L5.5,5.5 L8.5,9 Z M10.5,12 L13.8,16 L16,11.5 Z" fill="#222"/><text x="14.5" y="7.5" font-size="7" fill="#222">A</text></g>
<rect x="142.5" y="349.5" width="155.5" height="20.5" fill="#f8f8f8" stroke="#cacaca" stroke-width="1"/>
<text x="145.8" y="362.6" font-size="11.5" text-anchor="start" fill="#9a9a9a" font-weight="normal" textLength="44.7" lengthAdjust="spacingAndGlyphs" stroke="#9a9a9a" stroke-width="0.08" >90.00deg</text>
<rect x="116.5" y="375.5" width="22.5" height="21.5" fill="#c8c8c8" stroke="#5a5a5a" stroke-width="1"/>
<g transform="translate(117,376) scale(1)"><path d="M2,11 L9,3.5 M9.5,18.5 L2.5,12 M12,2 L19,9.5" stroke="#1f6a9a" stroke-width="1.8" fill="none"/><path d="M5,10 L10.5,4.5" stroke="#222" stroke-width="1.5"/><path d="M3.5,11.5 L4.8,7 L8,10.2 Z M12,3 L7.5,4.3 L10.8,7.5 Z" fill="#222"/><text x="8.2" y="18" font-size="7.5" font-weight="bold" fill="#222">D1</text></g>
<rect x="142.5" y="375.5" width="155.5" height="20.5" fill="#fff" stroke="#a0a0a0" stroke-width="1"/>
<text x="145.3" y="388.6" font-size="11.5" text-anchor="start" fill="#1a1a1a" font-weight="normal" textLength="45.2" lengthAdjust="spacingAndGlyphs" stroke="#1a1a1a" stroke-width="0.08" >45.00mm</text>
<rect x="299.5" y="350.5" width="14" height="8.5" rx="2" fill="#ececec"/><path d="M303,356.5 L306.5,353.5 L310,356.5" stroke="#c0c0c0" stroke-width="1.3" fill="none"/>
<rect x="299.5" y="360.5" width="14" height="8.5" rx="2" fill="#ececec"/><path d="M303,363.0 L306.5,366.0 L310,363.0" stroke="#c0c0c0" stroke-width="1.3" fill="none"/>
<rect x="299.5" y="376.5" width="14" height="8.5" rx="2" fill="#c4d8f6"/><path d="M303,382.5 L306.5,379.5 L310,382.5" stroke="#2a4a70" stroke-width="1.3" fill="none"/>
<rect x="299.5" y="386.5" width="14" height="8.5" rx="2" fill="#c4d8f6"/><path d="M303,389.0 L306.5,392.0 L310,389.0" stroke="#2a4a70" stroke-width="1.3" fill="none"/>
<rect x="299.5" y="427.5" width="14" height="8.5" rx="2" fill="#c4d8f6"/><path d="M303,433.5 L306.5,430.5 L310,433.5" stroke="#2a4a70" stroke-width="1.3" fill="none"/>
<rect x="299.5" y="437.5" width="14" height="8.5" rx="2" fill="#c4d8f6"/><path d="M303,440.0 L306.5,443.0 L310,440.0" stroke="#2a4a70" stroke-width="1.3" fill="none"/>
<rect x="143.0" y="405.5" width="11" height="11" fill="#eeeeee" stroke="#5a6a7a" stroke-width="1"/>
<text x="158.7" y="415.7" font-size="11.5" text-anchor="start" fill="#44444e" font-weight="normal" textLength="48.3" lengthAdjust="spacingAndGlyphs" stroke="#44444e" stroke-width="0.08" >Flip offset</text>
<g transform="translate(145,428) scale(1)"><rect x="0.5" y="9" width="4" height="4" fill="#fff" stroke="#222" stroke-width="0.9"/><rect x="4.5" y="4.8" width="4" height="4" fill="#3d8fc4" stroke="#1f5f8a" stroke-width="0.8"/><rect x="8.5" y="0.6" width="4" height="4" fill="#3d8fc4" stroke="#1f5f8a" stroke-width="0.8"/><path d="M8,11 H16 M8,13.5 H16 M10.5,8.5 L9.5,16 M13.5,8.5 L12.5,16" stroke="#222" stroke-width="1"/></g>
<rect x="165.5" y="426.5" width="132.5" height="20" fill="#fff" stroke="#a8a8a8" stroke-width="1"/>
<text x="168.5" y="438.7" font-size="11.5" text-anchor="start" fill="#1a1a1a" font-weight="normal" stroke="#1a1a1a" stroke-width="0.08" >1</text>
<rect x="116.5" y="452.5" width="22.5" height="21.5" fill="#f6f6f6" stroke="#a0a0a0" stroke-width="1"/>
<g transform="translate(117,453) scale(1)"><path d="M3,6.5 H18" stroke="#1f6a9a" stroke-width="1.6"/><path d="M3,10.5 H18" stroke="#333" stroke-width="1.6"/><path d="M3,14.5 H18" stroke="#1f6a9a" stroke-width="1.6"/></g>
<text x="144" y="466.7" font-size="11.5" text-anchor="start" fill="#44444e" font-weight="normal" textLength="48.7" lengthAdjust="spacingAndGlyphs" stroke="#44444e" stroke-width="0.08" >Mid Plane</text>
<rect x="113" y="483" width="205.5" height="1.2" fill="#a9a9a9" rx="0" />
<text x="116.5" y="496" font-size="10.8" text-anchor="start" fill="#38384a" font-weight="bold" textLength="93.5" lengthAdjust="spacingAndGlyphs" >Second Reference</text>
<path d="M302,494.5 L306.5,490 L311,494.5" stroke="#555" stroke-width="1.1" fill="none"/>
<g transform="translate(119,512) scale(1)"><path d="M1.5,2.2 L10.4,0.2 L15.8,3.2 L15.6,13.6 L6.7,16.7 L1.5,12.9 Z" fill="#f2f2f2" stroke="#222" stroke-width="1.1" stroke-linejoin="round"/><path d="M1.9,2.5 L10.4,0.6 L15.3,3.4 L6.3,5.4 Z" fill="#8cccf2"/><path d="M6.3,5.4 L15.3,3.4 V13.3 L6.7,16.3 Z" fill="#e0e0e0"/><path d="M6.3,5.4 L15.8,3.2 M1.5,2.2 L6.3,5.4" stroke="#333" stroke-width="0.7" fill="none"/><path d="M6.4,5.6 V16" stroke="#2a7fc0" stroke-width="2.2"/><rect x="13.2" y="10.8" width="3.8" height="3.8" fill="#1f6aa8" stroke="#0a2a50" stroke-width="0.7"/></g>
<rect x="142.5" y="507.5" width="171" height="22" fill="#cce4f7" stroke="#3d9ae8" stroke-width="1.3"/>
<rect x="143.2" y="508.2" width="11" height="20.6" fill="#8a00ff" rx="0" />
<rect x="113" y="541" width="205.5" height="1.2" fill="#a9a9a9" rx="0" />
<text x="116.5" y="553.7" font-size="10.8" text-anchor="start" fill="#38384a" font-weight="bold" textLength="83" lengthAdjust="spacingAndGlyphs" >Third Reference</text>
<path d="M302,552.5 L306.5,548 L311,552.5" stroke="#555" stroke-width="1.1" fill="none"/>
<g transform="translate(119,570) scale(1)"><path d="M1.5,2.2 L10.4,0.2 L15.8,3.2 L15.6,13.6 L6.7,16.7 L1.5,12.9 Z" fill="#f2f2f2" stroke="#222" stroke-width="1.1" stroke-linejoin="round"/><path d="M1.9,2.5 L10.4,0.6 L15.3,3.4 L6.3,5.4 Z" fill="#8cccf2"/><path d="M6.3,5.4 L15.3,3.4 V13.3 L6.7,16.3 Z" fill="#e0e0e0"/><path d="M6.3,5.4 L15.8,3.2 M1.5,2.2 L6.3,5.4" stroke="#333" stroke-width="0.7" fill="none"/><path d="M6.4,5.6 V16" stroke="#2a7fc0" stroke-width="2.2"/><rect x="13.2" y="10.8" width="3.8" height="3.8" fill="#1f6aa8" stroke="#0a2a50" stroke-width="0.7"/></g>
<rect x="142.5" y="565" width="171" height="22.5" fill="#fff" stroke="#acacac" stroke-width="1"/>
<rect x="143" y="565.5" width="11" height="21.5" fill="#18d048" rx="0" />
<rect x="113" y="599" width="205.5" height="1.2" fill="#a9a9a9" rx="0" />
<text x="116.5" y="612" font-size="10.8" text-anchor="start" fill="#38384a" font-weight="bold" textLength="41.8" lengthAdjust="spacingAndGlyphs" >Options</text>
<path d="M302,610.5 L306.5,606 L311,610.5" stroke="#555" stroke-width="1.1" fill="none"/>
<rect x="142.8" y="623.0" width="11" height="11" fill="#eeeeee" stroke="#5a6a7a" stroke-width="1"/>
<text x="158.3" y="632.7" font-size="11.5" text-anchor="start" fill="#44444e" font-weight="normal" textLength="55.7" lengthAdjust="spacingAndGlyphs" stroke="#44444e" stroke-width="0.08" >Flip normal</text>
<rect x="818" y="64" width="132" height="133.5" fill="#f4f4f4" rx="0" />
<rect x="817.5" y="64" width="1.5" height="134" fill="#c4c4c4" rx="0" />
<rect x="818" y="197" width="132" height="1" fill="#d0d0d0" rx="0" />
<rect x="820.9" y="65.5" width="62" height="22.5" rx="4" fill="none" stroke="#000" stroke-width="3.2"/>
<text x="845" y="78.7" font-size="9.6" text-anchor="start" fill="#2a2a3c" font-weight="normal" textLength="22.5" lengthAdjust="spacingAndGlyphs" stroke="#2a2a3c" stroke-width="0.25" >Plane</text>
<text x="845" y="96.9" font-size="9.6" text-anchor="start" fill="#2a2a3c" font-weight="normal" textLength="15.8" lengthAdjust="spacingAndGlyphs" stroke="#2a2a3c" stroke-width="0.25" >Axis</text>
<text x="845" y="116.0" font-size="9.6" text-anchor="start" fill="#2a2a3c" font-weight="normal" textLength="77.2" lengthAdjust="spacingAndGlyphs" stroke="#2a2a3c" stroke-width="0.25" >Coordinate System</text>
<text x="845" y="134.7" font-size="9.6" text-anchor="start" fill="#2a2a3c" font-weight="normal" textLength="21.5" lengthAdjust="spacingAndGlyphs" stroke="#2a2a3c" stroke-width="0.25" >Point</text>
<text x="845" y="153.2" font-size="9.6" text-anchor="start" fill="#2a2a3c" font-weight="normal" textLength="61" lengthAdjust="spacingAndGlyphs" stroke="#2a2a3c" stroke-width="0.25" >Center of Mass</text>
<text x="845" y="172.1" font-size="9.6" text-anchor="start" fill="#2a2a3c" font-weight="normal" textLength="57.5" lengthAdjust="spacingAndGlyphs" stroke="#2a2a3c" stroke-width="0.25" >Bounding Box</text>
<text x="845" y="190.5" font-size="9.6" text-anchor="start" fill="#2a2a3c" font-weight="normal" textLength="63.7" lengthAdjust="spacingAndGlyphs" stroke="#2a2a3c" stroke-width="0.25" >Mate Reference</text>
<g transform="translate(826,69) scale(1)"><path d="M0.5,2.5 L11,0.5 V10.5 L0.5,12.5 Z" fill="#5aa0d0" stroke="#2a5f8a" stroke-width="0.8"/><path d="M5.7,0 V13" stroke="#333" stroke-width="0.9" stroke-dasharray="1.5,1"/></g>
<path d="M824.5,101 L841,89.5" stroke="#2a7fc0" stroke-width="1.4" stroke-dasharray="2,1.6"/>
<path d="M831,106 V112.5 L825,118.5 M831,112.5 L838.5,114 M828.5,108 L831,105 L833.5,108 M824.5,116 L824.7,119.3 L828,119 M836,112 L838.8,114 L836.5,116" stroke="#111" stroke-width="1.3" fill="none"/>
<circle cx="831.4" cy="131.1" r="1.8" fill="#2a6fa0"/>
<circle cx="832" cy="150.2" r="5.5" fill="#fff" stroke="#111" stroke-width="1"/><path d="M832,150.2 V144.7 A5.5,5.5 0 0 0 826.5,150.2 Z M832,150.2 V155.7 A5.5,5.5 0 0 0 837.5,150.2 Z" fill="#111"/><path d="M825,150.2 H839 M832,143 V157.5" stroke="#111" stroke-width="1"/>
<rect x="825.5" y="162.5" width="13" height="13" fill="none" stroke="#555" stroke-width="0.9" stroke-dasharray="1.2,1"/><path d="M827.5,167 L830,164.5 H836 V171.5 L833.5,174 H827.5 Z" fill="#3d8fc4" stroke="#1f5f8a" stroke-width="0.7"/><path d="M828.5,167.5 h4 v3 h-4z" fill="#8fcbef"/>
<path d="M824.5,183.5 L827,181.5 H832 V189 L829.5,191 H824.5 Z" fill="#3d8fc4" stroke="#1f5f8a" stroke-width="0.7"/><path d="M834,191 V182 Q834,179.5 836.5,179.5 Q839,179.5 839,182 V189 Q839,191 836.5,191 Q834.8,191 834.8,189 V183" fill="none" stroke="#777" stroke-width="1"/>
<line x1="758.5" y1="134.9" x2="813" y2="93" stroke="#111" stroke-width="1.3"/><polygon points="820.5,88.5 811.8,90.5 816.8,96.8" fill="#000"/>
</svg>
</body></html>
